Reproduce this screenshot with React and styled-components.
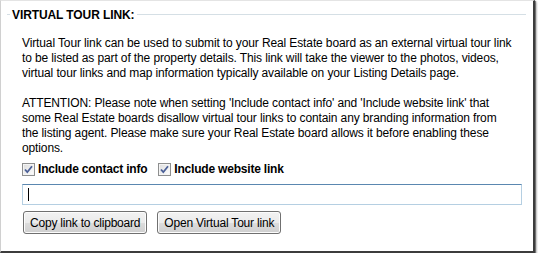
import React from 'react';
import styled, { createGlobalStyle } from 'styled-components';

const GlobalStyle = createGlobalStyle`
	html, body {
		margin: 0;
		padding: 0;
		background: #ffffff;
	}
	body {
		font-family: 'Liberation Sans', Arial, sans-serif;
		font-size: 12px;
		color: #000;
	}
`;

const Frame = styled.div`
	box-sizing: border-box;
	width: 535px;
	height: 253px;
	background: #ffffff;
	border-left: 1px solid #d0d0d0;
	border-top: 1px solid #e4e4e4;
	border-right: 2px solid #3c3c3c;
	border-bottom: 2px solid #3c3c3c;
	box-shadow: 1px 1px 1px rgba(0, 0, 0, 0.45), 2px 2px 2px rgba(0, 0, 0, 0.2);
	padding: 6px 7px 0 6px;
`;

const Legend = styled.div`
	display: flex;
	align-items: center;
	gap: 2px;
	height: 15px;

	&::before {
		content: '';
		width: 3px;
		height: 1px;
		background: #d5dfe5;
	}

	&::after {
		content: '';
		flex: 1;
		height: 1px;
		background: #d5dfe5;
	}
`;

const LegendText = styled.span`
	font-weight: bold;
	font-size: 12px;
	letter-spacing: -0.1px;
	padding-right: 1px;
`;

const Body = styled.div`
	padding: 14px 0 0 15px;
	display: flex;
	flex-direction: column;
`;

const Paragraph = styled.p`
	margin: 0 0 15px;
	line-height: 15px;
	font-size: 12px;
	letter-spacing: -0.12px;
	white-space: nowrap;
`;

const Options = styled.div`
	display: flex;
	align-items: center;
	gap: 11px;
	margin-top: -12px;
	height: 20px;
`;

const Option = styled.label`
	display: flex;
	align-items: center;
	gap: 3px;
	font-weight: bold;
	letter-spacing: -0.2px;
`;

const Box = styled.span`
	box-sizing: border-box;
	width: 13px;
	height: 13px;
	border: 1px solid #8e8f8f;
	background: linear-gradient(135deg, #dcdcdc, #ffffff);
	display: flex;
	align-items: center;
	justify-content: center;
	box-shadow: inset 0 0 0 1px #f4f4f4;
`;

const TextBox = styled.div`
	box-sizing: border-box;
	margin-top: 5px;
	width: 500px;
	height: 21px;
	border: 1px solid #b5cfe2;
	border-top-color: #5a87b0;
	display: flex;
	align-items: center;
	padding-left: 5px;
`;

const Caret = styled.span`
	width: 1px;
	height: 13px;
	background: #000;
`;

const Buttons = styled.div`
	display: flex;
	gap: 10px;
	margin-top: 6px;
	padding-left: 1px;
`;

const Button = styled.button`
	box-sizing: border-box;
	height: 23px;
	padding: 0 6px;
	border: 1px solid #707070;
	border-radius: 3px;
	font-family: inherit;
	font-size: 12px;
	letter-spacing: -0.2px;
	color: #000;
	background: linear-gradient(#f2f2f2 0%, #ebebeb 50%, #dddddd 51%, #cfcfcf 100%);
	box-shadow: inset 0 0 0 1px #fcfcfc;
`;

const Check = () => (
	<svg width="9" height="9" viewBox="0 0 9 9">
		<path
			d="M1 4.5 L3.3 7.2 L8 1.2"
			fill="none"
			stroke="#4a5f97"
			strokeWidth="1.8"
		/>
	</svg>
);

const Checkbox = ({ label }) => (
	<Option>
		<Box>
			<Check />
		</Box>
		{label}
	</Option>
);

const App = () => (
	<>
		<GlobalStyle />
		<Frame>
			<Legend>
				<LegendText>VIRTUAL TOUR LINK:</LegendText>
			</Legend>
			<Body>
				<Paragraph>
					Virtual Tour link can be used to submit to your Real Estate board as an external virtual tour link
					<br />
					to be listed as part of the property details. This link will take the viewer to the photos, videos,
					<br />
					virtual tour links and map information typically available on your Listing Details page.
				</Paragraph>
				<Paragraph>
					ATTENTION: Please note when setting 'Include contact info' and 'Include website link' that
					<br />
					some Real Estate boards disallow virtual tour links to contain any branding information from
					<br />
					the listing agent. Please make sure your Real Estate board allows it before enabling these
					<br />
					options.
				</Paragraph>
				<Options>
					<Checkbox label="Include contact info" />
					<Checkbox label="Include website link" />
				</Options>
				<TextBox>
					<Caret />
				</TextBox>
				<Buttons>
					<Button type="button">Copy link to clipboard</Button>
					<Button type="button">Open Virtual Tour link</Button>
				</Buttons>
			</Body>
		</Frame>
	</>
);

export default App;
